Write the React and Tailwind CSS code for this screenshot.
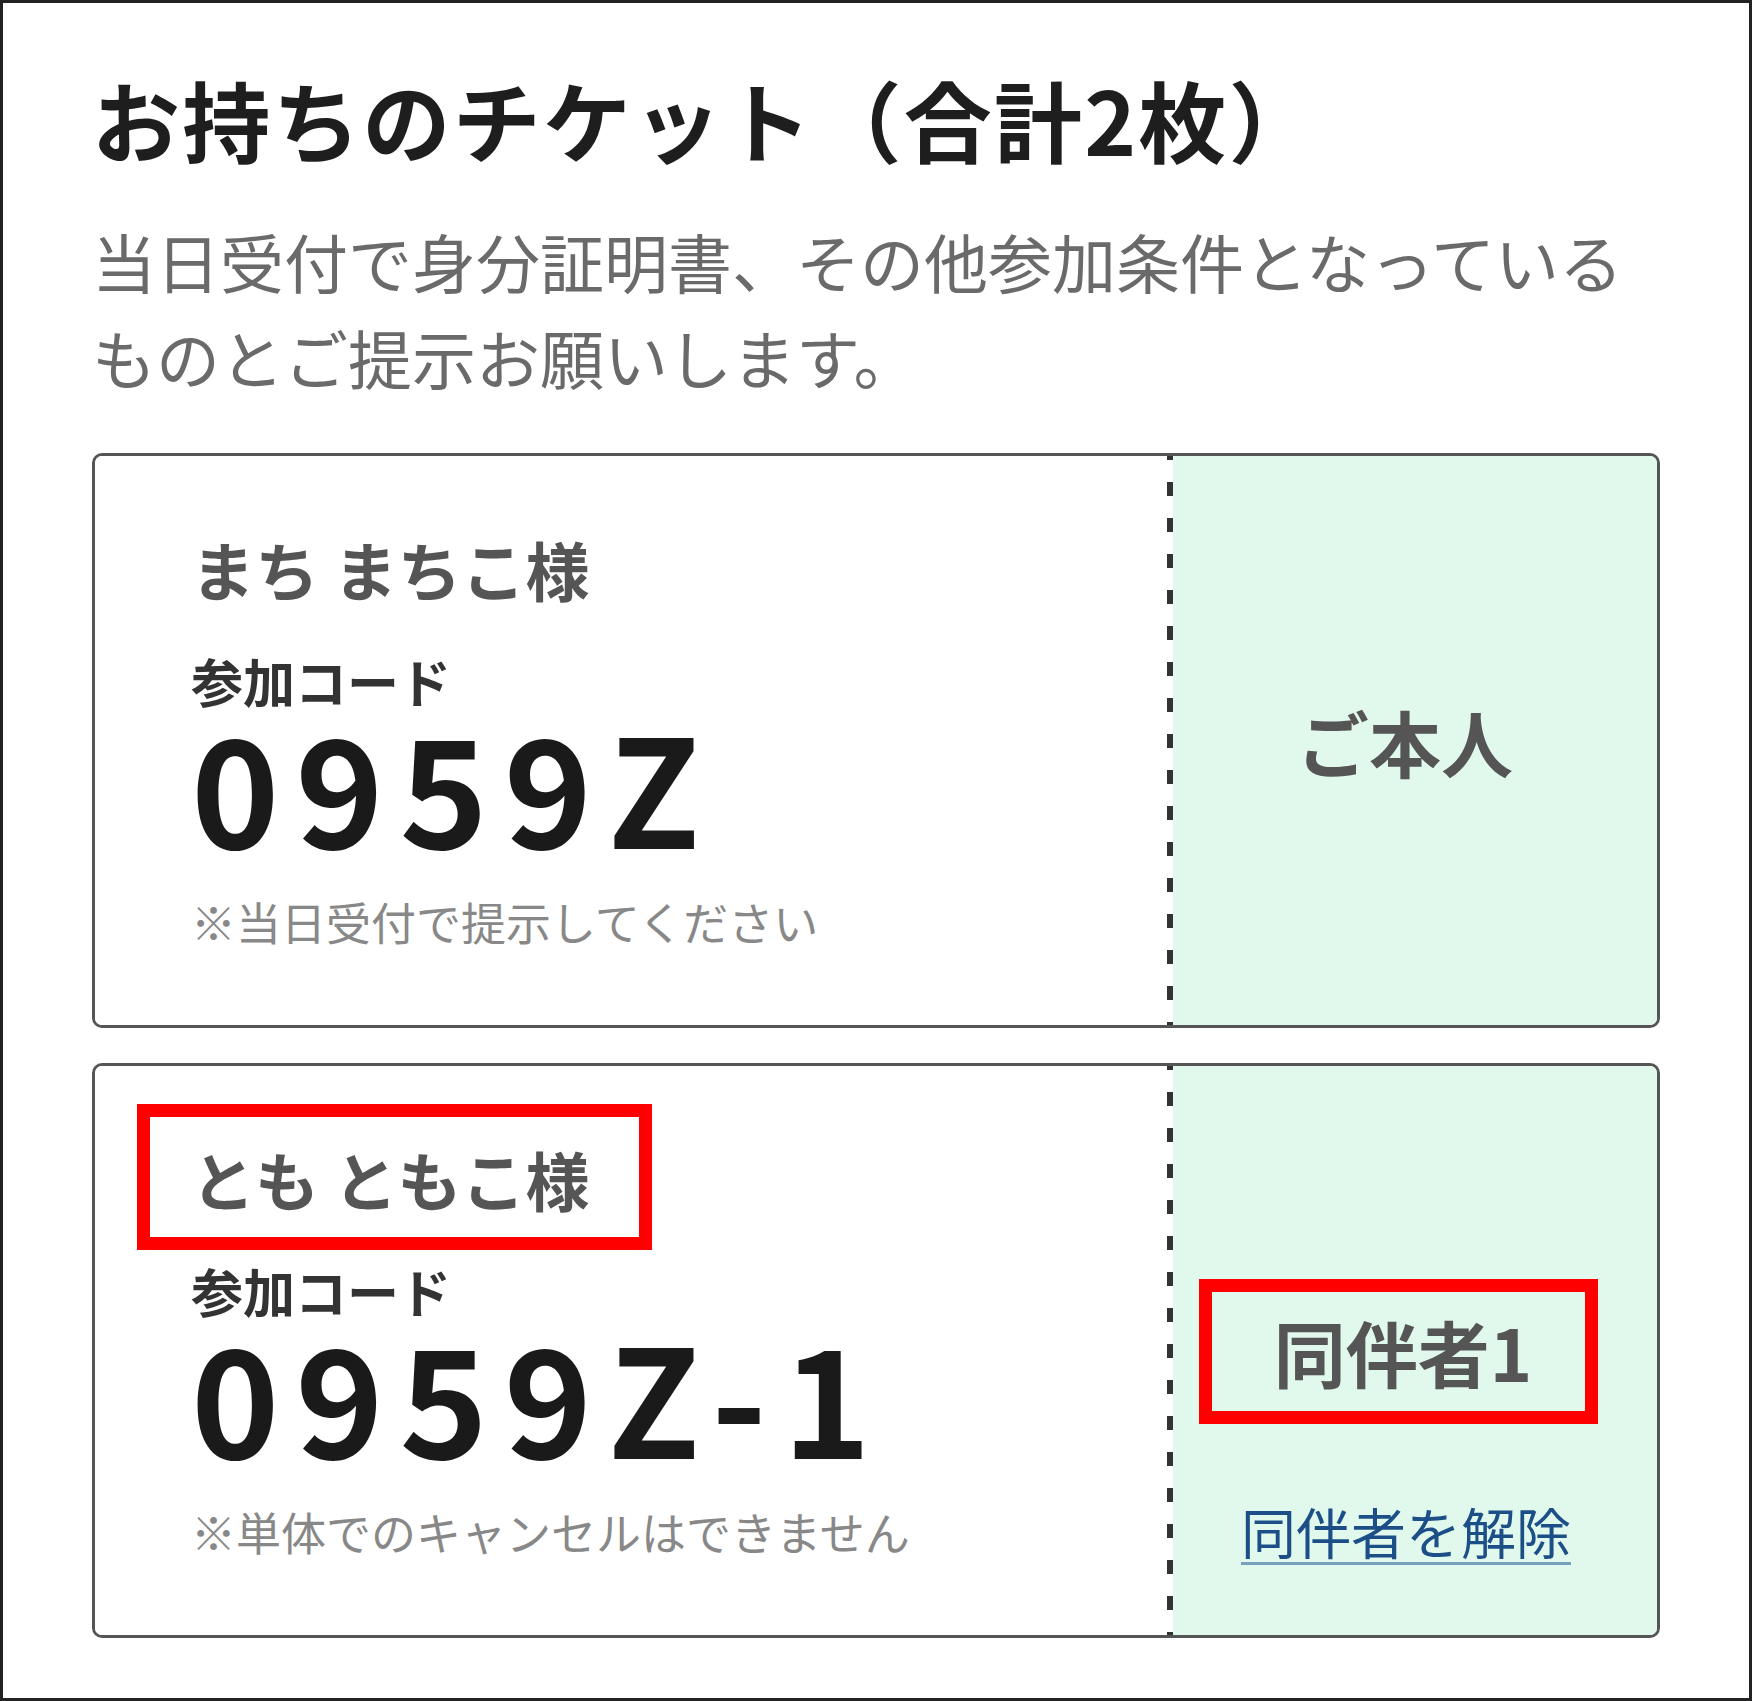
const font = { fontFamily: '"Noto Sans CJK JP", "Noto Sans", sans-serif' };

function Divider() {
  return (
    <div className="w-[6px] shrink-0 bg-[repeating-linear-gradient(to_bottom,transparent_0_22px,#333_22px_40px,transparent_40px_36px)] bg-[length:6px_36px] bg-[position:0_4px]" />
  );
}

function Ticket({ name, code, note, side, children }) {
  return (
    <div className="relative flex rounded-[10px] border-[3px] border-[#555] overflow-hidden">
      <div className="flex-1 bg-white pl-[96px] pt-[80px] pb-[81px]">
        <div className="text-[64px] leading-none font-bold text-[#555]">{name}</div>
        <div className="mt-[55px] text-[52px] leading-none font-bold text-[#333]">参加コード</div>
        <div className="mt-[17px] text-[150px] leading-[120px] font-bold text-[#1a1a1a] tracking-[0.105em]">{code}</div>
        <div className="mt-[55px] text-[45px] leading-none text-[#888]">{note}</div>
      </div>
      <Divider />
      <div className="w-[484px] shrink-0 bg-[#e1f8ec]">{side}</div>
      {children}
    </div>
  );
}

export default function App() {
  return (
    <div style={font} className="w-[1752px] h-[1701px] border-[3px] border-[#222] bg-white px-[89px] pt-[71px]">
      <h1 className="text-[88px] leading-none font-bold text-[#1e1e1e] tracking-[0.025em]">お持ちのチケット（合計2枚）</h1>
      <p className="mt-[50px] text-[64px] leading-[96px] text-[#6a6a6a]">
        当日受付で身分証明書、その他参加条件となっているものとご提示お願いします。
      </p>

      <div className="mt-[49px] flex flex-col gap-[35px]">
        <Ticket
          name="まち まちこ様"
          code="0959Z"
          note="※当日受付で提示してください"
          side={
            <div className="h-full flex items-center justify-center">
              <span className="text-[72px] leading-none font-bold text-[#555] -translate-x-[10px]">ご本人</span>
            </div>
          }
        />

        <Ticket
          name="とも ともこ様"
          code="0959Z-1"
          note="※単体でのキャンセルはできません"
          side={
            <div className="h-full grid grid-rows-[1fr_auto_1fr] justify-items-center">
              <div />
              <span className="text-[72px] leading-none font-bold text-[#555] -translate-x-[12px]">同伴者1</span>
              <div className="pt-[116px] -translate-x-[9px]">
                <a href="#" className="text-[55px] leading-none text-[#1c4e87] underline decoration-[#7aa0c0] decoration-[3px] underline-offset-[8px]">
                  同伴者を解除
                </a>
              </div>
            </div>
          }
        >
          <div className="absolute left-[42px] top-[38px] w-[515px] h-[146px] border-[13px] border-[#ff0000]" />
          <div className="absolute left-[1104px] top-[213px] w-[399px] h-[145px] border-[13px] border-[#ff0000]" />
        </Ticket>
      </div>
    </div>
  );
}
